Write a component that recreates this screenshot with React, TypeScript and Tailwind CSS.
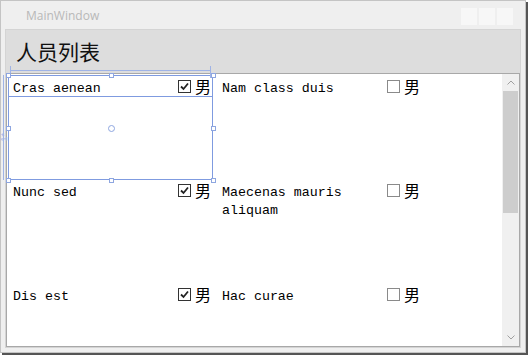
import React from "react";

type Person = { name: string; male: boolean };

const people: Person[] = [
  { name: "Cras aenean", male: true },
  { name: "Nam class duis", male: false },
  { name: "Nunc sed", male: true },
  { name: "Maecenas mauris aliquam", male: false },
  { name: "Dis est", male: true },
  { name: "Hac curae", male: false },
];

function CheckBox({ checked }: { checked: boolean }) {
  return (
    <span
      className={`inline-flex h-[13px] w-[13px] items-center justify-center border bg-white ${
        checked ? "border-[#333333]" : "border-[#8a8a8a]"
      }`}
    >
      {checked && (
        <svg width="11" height="11" viewBox="0 0 11 11">
          <path d="M2 5.5 L4.5 8 L9 2.5" fill="none" stroke="#222" strokeWidth="1.8" />
        </svg>
      )}
    </span>
  );
}

function PersonItem({ person }: { person: Person }) {
  return (
    <div className="flex h-[104px] w-[209px] items-start pl-[6px] pt-[4px]">
      <div className="w-[165px] pt-[2px] font-['Liberation_Mono',monospace] text-[13.3px] leading-[18px] text-black">
        {person.name}
      </div>
      <div className="flex items-center gap-[4px]">
        <CheckBox checked={person.male} />
        <span className="font-['Noto_Sans_CJK_SC',sans-serif] text-[16px] leading-[16px] text-black">
          男
        </span>
      </div>
    </div>
  );
}

function Handle({ x, y }: { x: number; y: number }) {
  return (
    <span
      className="absolute h-[5px] w-[5px] border border-[#8ea6e0] bg-white"
      style={{ left: x - 2, top: y - 2 }}
    />
  );
}

export default function App() {
  return (
    <div className="relative h-[358px] w-[531px] overflow-hidden bg-white">
      <div className="flex h-[353px] w-[526px] flex-col overflow-hidden border border-[#c4c4c4] bg-[#efefef] shadow-[2px_2px_0_#555]">
        {/* title bar */}
        <div className="flex h-[28px] shrink-0 items-center justify-between pl-[25px] pr-[12px] pt-[2px]">
          <span className="font-['Open_Sans',sans-serif] text-[12px] text-[#b8b8b8]">MainWindow</span>
          <div className="flex gap-[2px]">
            <span className="h-[17px] w-[16px] bg-[#f7f7f7]" />
            <span className="h-[17px] w-[16px] bg-[#f7f7f7]" />
            <span className="h-[17px] w-[16px] bg-[#f7f7f7]" />
          </div>
        </div>
        <div className="mx-[4px] mb-[4px] flex min-h-0 flex-1 flex-col border border-[#d4d4d4] bg-[#dddddd]">
          <div className="flex h-[43px] shrink-0 items-center pl-[10px] font-['Noto_Sans_CJK_SC',sans-serif] text-[21px] text-[#111]">
            人员列表
          </div>
          <div className="flex min-h-0 flex-1 overflow-hidden border border-[#a8a8a8] bg-white">
            <div className="grid flex-1 grid-cols-[209px_209px] content-start">
              {people.map((p) => (
                <PersonItem key={p.name} person={p} />
              ))}
            </div>
            <div className="flex w-[17px] flex-col bg-[#f0f0f0]">
              <div className="flex h-[17px] shrink-0 items-center justify-center">
                <svg width="8" height="5" viewBox="0 0 8 5">
                  <path d="M0.5 4.5 L4 1 L7.5 4.5" fill="none" stroke="#a0a0a0" />
                </svg>
              </div>
              <div className="mx-[1px] h-[122px] shrink-0 bg-[#cdcdcd]" />
              <div className="flex-1" />
              <div className="flex h-[17px] shrink-0 items-center justify-center">
                <svg width="8" height="5" viewBox="0 0 8 5">
                  <path d="M0.5 0.5 L4 4 L7.5 0.5" fill="none" stroke="#a0a0a0" />
                </svg>
              </div>
            </div>
          </div>
        </div>
      </div>

      {/* designer selection adorner */}
      <div className="absolute left-[8px] top-[75px] h-[105px] w-[205px] border border-[#7f9be0]" />
      <div className="absolute left-[8px] top-[96px] h-px w-[205px] bg-[#7f9be0]" />
      <div className="absolute left-[10px] top-[70px] h-px w-[200px] bg-[#9fb3e6]" />
      <div className="absolute left-[10px] top-[66px] h-[12px] w-px bg-[#9fb3e6]" />
      <div className="absolute left-[210px] top-[66px] h-[12px] w-px bg-[#9fb3e6]" />
      <div className="absolute left-[3px] top-[75px] h-[105px] w-px bg-[#9fb3e6]" />
      <div className="absolute left-0 top-[133px] rotate-180 font-['Liberation_Sans',sans-serif] text-[9px] leading-[9px] text-[#9fb3e6] [writing-mode:vertical-rl]">
        1*
      </div>
      <Handle x={8} y={75} />
      <Handle x={111} y={75} />
      <Handle x={213} y={75} />
      <Handle x={8} y={128} />
      <Handle x={213} y={128} />
      <Handle x={8} y={180} />
      <Handle x={111} y={180} />
      <Handle x={213} y={180} />
      <span className="absolute left-[108px] top-[125px] h-[7px] w-[7px] rounded-full border border-[#8ea6e0] bg-white" />
    </div>
  );
}
